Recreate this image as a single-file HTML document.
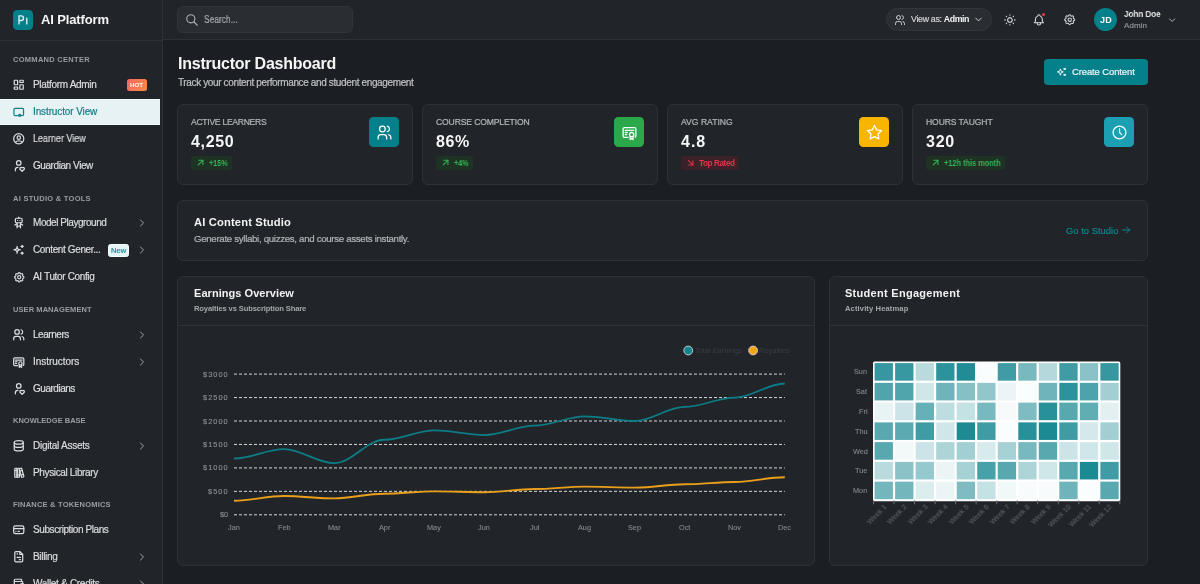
<!DOCTYPE html>
<html><head><meta charset="utf-8">
<style>
*{box-sizing:border-box;margin:0;padding:0}
html,body{width:1200px;height:584px;overflow:hidden;background:#1b1e22;font-family:"Liberation Sans", sans-serif;color:#ececec}
.abs{position:absolute;display:block}
.t{position:absolute;white-space:nowrap;line-height:1;will-change:transform;-webkit-text-stroke:0.2px currentColor}
.t b{-webkit-text-stroke:0}
</style></head><body>
<div class="abs" style="left:0;top:0;width:162px;height:584px;background:#212428"></div>
<div class="abs" style="left:162px;top:0;width:1px;height:584px;background:#2e3136"></div>
<div class="abs" style="left:0;top:40px;width:162px;height:1px;background:#2e3136"></div>
<div class="abs" style="left:12.5px;top:9.9px;width:20px;height:19.8px;border-radius:4.3px;background:#03808a"></div>
<svg class="abs" style="left:12.5px;top:9.9px" width="20" height="20" viewBox="0 0 20 20" fill="none" stroke="#e6f2f3" stroke-width="1.35" stroke-linecap="round" stroke-linejoin="round"><path d="M6 13.9V5.9h2.2a2.3 2.3 0 0 1 0 4.6H6.6"/><path d="M13.8 8.1v5.8"/></svg>
<div class="t" style="left:40.50px;top:13px;font-size:13px;font-weight:700;color:#f5f5f5;-webkit-text-stroke:0;letter-spacing:-0.130px;">AI Platform</div>
<div class="t" style="left:12.50px;top:56px;font-size:7.5px;font-weight:700;color:#9a9da1;-webkit-text-stroke:0;letter-spacing:0.283px;">COMMAND CENTER</div>
<svg class="abs" style="left:12.149999999999999px;top:78.15px;color:#dcdddf" width="13.5" height="13.5" viewBox="0 0 24 24" fill="none" stroke="currentColor" stroke-width="2.2" stroke-linecap="round" stroke-linejoin="round"><path d="M5 4h4a1 1 0 0 1 1 1v6a1 1 0 0 1 -1 1h-4a1 1 0 0 1 -1 -1v-6a1 1 0 0 1 1 -1"/><path d="M5 16h4a1 1 0 0 1 1 1v2a1 1 0 0 1 -1 1h-4a1 1 0 0 1 -1 -1v-2a1 1 0 0 1 1 -1"/><path d="M15 12h4a1 1 0 0 1 1 1v6a1 1 0 0 1 -1 1h-4a1 1 0 0 1 -1 -1v-6a1 1 0 0 1 1 -1"/><path d="M15 4h4a1 1 0 0 1 1 1v2a1 1 0 0 1 -1 1h-4a1 1 0 0 1 -1 -1v-2a1 1 0 0 1 1 -1"/></svg>
<div class="t" style="left:33.00px;top:80px;font-size:10px;font-weight:400;color:#dcdddf;letter-spacing:-0.309px;">Platform Admin</div>
<div class="abs" style="left:127px;top:79px;width:20px;height:12px;border-radius:2.5px;background:linear-gradient(120deg,#fa6760,#f68a48)"></div>
<div class="t" style="left:130.00px;top:82px;font-size:6.2px;font-weight:700;color:#fff5f0;-webkit-text-stroke:0;letter-spacing:-0.033px;">HOT</div>
<div class="abs" style="left:0;top:99px;width:159.5px;height:26px;background:#e6f2f3;border-top:1px solid #eef9f9;border-bottom:1px solid #eef9f9"></div>
<svg class="abs" style="left:12.149999999999999px;top:105.15px;color:#127f88" width="13.5" height="13.5" viewBox="0 0 24 24" fill="none" stroke="currentColor" stroke-width="2.2" stroke-linecap="round" stroke-linejoin="round"><path d="M9.5 19h-4a2 2 0 0 1 -2 -2v-9a2 2 0 0 1 2 -2h13a2 2 0 0 1 2 2v9a2 2 0 0 1 -2 2"/><ellipse cx="13.8" cy="18.4" rx="3" ry="2.1" fill="currentColor" stroke-width="1.2"/></svg>
<div class="t" style="left:33.00px;top:107px;font-size:10px;font-weight:400;color:#127f88;letter-spacing:-0.118px;">Instructor View</div>
<svg class="abs" style="left:12.149999999999999px;top:132.15px;color:#dcdddf" width="13.5" height="13.5" viewBox="0 0 24 24" fill="none" stroke="currentColor" stroke-width="2.2" stroke-linecap="round" stroke-linejoin="round"><path d="M12 12m-9 0a9 9 0 1 0 18 0a9 9 0 1 0 -18 0"/><path d="M12 10m-3 0a3 3 0 1 0 6 0a3 3 0 1 0 -6 0"/><path d="M6.168 18.849a4 4 0 0 1 3.832 -2.849h4a4 4 0 0 1 3.834 2.855"/></svg>
<div class="t" style="left:33.00px;top:134px;font-size:10px;font-weight:400;color:#dcdddf;transform:scaleX(0.8973);transform-origin:0 0;">Learner View</div>
<svg class="abs" style="left:12.149999999999999px;top:159.15px;color:#dcdddf" width="13.5" height="13.5" viewBox="0 0 24 24" fill="none" stroke="currentColor" stroke-width="2.2" stroke-linecap="round" stroke-linejoin="round"><path d="M8 7a4 4 0 1 0 8 0a4 4 0 0 0 -8 0"/><path d="M6 21v-2a4 4 0 0 1 4 -4h.5"/><path d="M18 22l3.35 -3.284a2.143 2.143 0 0 0 .005 -3.071a2.242 2.242 0 0 0 -3.129 -.006l-.224 .22l-.223 -.22a2.242 2.242 0 0 0 -3.128 -.006a2.143 2.143 0 0 0 -.006 3.071l3.355 3.296z"/></svg>
<div class="t" style="left:33.00px;top:161px;font-size:10px;font-weight:400;color:#dcdddf;letter-spacing:-0.427px;">Guardian View</div>
<div class="t" style="left:12.50px;top:195px;font-size:7.5px;font-weight:700;color:#9a9da1;-webkit-text-stroke:0;letter-spacing:0.275px;">AI STUDIO &amp; TOOLS</div>
<svg class="abs" style="left:12.149999999999999px;top:216.15px;color:#dcdddf" width="13.5" height="13.5" viewBox="0 0 24 24" fill="none" stroke="currentColor" stroke-width="2.2" stroke-linecap="round" stroke-linejoin="round"><path d="M6 6a2 2 0 0 1 2 -2h8a2 2 0 0 1 2 2v4a2 2 0 0 1 -2 2h-8a2 2 0 0 1 -2 -2l0 -4"/><path d="M12 2v2"/><path d="M9 12v9"/><path d="M15 12v9"/><path d="M5 16l4 -2"/><path d="M15 14l4 2"/><path d="M9 18h6"/><path d="M10 8v.01"/><path d="M14 8v.01"/></svg>
<div class="t" style="left:33.00px;top:218px;font-size:10px;font-weight:400;color:#dcdddf;letter-spacing:-0.454px;">Model Playground</div>
<svg class="abs" style="left:136px;top:216.7px;color:#a9abaf" width="12" height="12" viewBox="0 0 24 24" fill="none" stroke="currentColor" stroke-width="1.9" stroke-linecap="round" stroke-linejoin="round"><path d="M9 6l6 6l-6 6"/></svg>
<svg class="abs" style="left:12.149999999999999px;top:243.15px;color:#dcdddf" width="13.5" height="13.5" viewBox="0 0 24 24" fill="none" stroke="currentColor" stroke-width="2.2" stroke-linecap="round" stroke-linejoin="round"><path d="M16 18a2 2 0 0 1 2 2a2 2 0 0 1 2 -2a2 2 0 0 1 -2 -2a2 2 0 0 1 -2 2zm0 -12a2 2 0 0 1 2 2a2 2 0 0 1 2 -2a2 2 0 0 1 -2 -2a2 2 0 0 1 -2 2zm-7 12a6 6 0 0 1 6 -6a6 6 0 0 1 -6 -6a6 6 0 0 1 -6 6a6 6 0 0 1 6 6z"/></svg>
<div class="t" style="left:33.00px;top:245px;font-size:10px;font-weight:400;color:#dcdddf;letter-spacing:-0.373px;">Content Gener...</div>
<svg class="abs" style="left:136px;top:243.7px;color:#a9abaf" width="12" height="12" viewBox="0 0 24 24" fill="none" stroke="currentColor" stroke-width="1.9" stroke-linecap="round" stroke-linejoin="round"><path d="M9 6l6 6l-6 6"/></svg>
<div class="abs" style="left:108px;top:243.6px;width:21.4px;height:13px;border-radius:2.5px;background:#e4f3f4;border:1px solid #f4fbfb"></div>
<div class="t" style="left:111.15px;top:247px;font-size:7.5px;font-weight:400;color:#1a8c95;letter-spacing:0.042px;">New</div>
<svg class="abs" style="left:12.649999999999999px;top:270.65px;color:#dcdddf" width="12.5" height="12.5" viewBox="0 0 24 24" fill="none" stroke="currentColor" stroke-width="2.2" stroke-linecap="round" stroke-linejoin="round"><path d="M10.325 4.317c.426 -1.756 2.924 -1.756 3.35 0a1.724 1.724 0 0 0 2.573 1.066c1.543 -.94 3.31 .826 2.37 2.37a1.724 1.724 0 0 0 1.065 2.572c1.756 .426 1.756 2.924 0 3.35a1.724 1.724 0 0 0 -1.066 2.573c.94 1.543 -.826 3.31 -2.37 2.37a1.724 1.724 0 0 0 -2.572 1.065c-.426 1.756 -2.924 1.756 -3.35 0a1.724 1.724 0 0 0 -2.573 -1.066c-1.543 .94 -3.31 -.826 -2.37 -2.37a1.724 1.724 0 0 0 -1.065 -2.572c-1.756 -.426 -1.756 -2.924 0 -3.35a1.724 1.724 0 0 0 1.066 -2.573c-.94 -1.543 .826 -3.31 2.37 -2.37c1 .608 2.296 .07 2.572 -1.065z"/><path d="M9 12a3 3 0 1 0 6 0a3 3 0 0 0 -6 0"/></svg>
<div class="t" style="left:33.00px;top:272px;font-size:10px;font-weight:400;color:#dcdddf;letter-spacing:-0.350px;">AI Tutor Config</div>
<div class="t" style="left:12.50px;top:306px;font-size:7.5px;font-weight:700;color:#9a9da1;-webkit-text-stroke:0;letter-spacing:0.077px;">USER MANAGEMENT</div>
<svg class="abs" style="left:12.149999999999999px;top:328.15px;color:#dcdddf" width="13.5" height="13.5" viewBox="0 0 24 24" fill="none" stroke="currentColor" stroke-width="2.2" stroke-linecap="round" stroke-linejoin="round"><path d="M9 7m-4 0a4 4 0 1 0 8 0a4 4 0 1 0 -8 0"/><path d="M3 21v-2a4 4 0 0 1 4 -4h4a4 4 0 0 1 4 4v2"/><path d="M16 3.13a4 4 0 0 1 0 7.75"/><path d="M21 21v-2a4 4 0 0 0 -3 -3.85"/></svg>
<div class="t" style="left:33.00px;top:330px;font-size:10px;font-weight:400;color:#dcdddf;letter-spacing:-0.453px;">Learners</div>
<svg class="abs" style="left:136px;top:328.7px;color:#a9abaf" width="12" height="12" viewBox="0 0 24 24" fill="none" stroke="currentColor" stroke-width="1.9" stroke-linecap="round" stroke-linejoin="round"><path d="M9 6l6 6l-6 6"/></svg>
<svg class="abs" style="left:12.149999999999999px;top:355.15px;color:#dcdddf" width="13.5" height="13.5" viewBox="0 0 24 24" fill="none" stroke="currentColor" stroke-width="2.2" stroke-linecap="round" stroke-linejoin="round"><path d="M15 15m-3 0a3 3 0 1 0 6 0a3 3 0 1 0 -6 0"/><path d="M13 17.5v4.5l2 -1.5l2 1.5v-4.5"/><path d="M10 19h-5a2 2 0 0 1 -2 -2v-10c0 -1.1 .9 -2 2 -2h14a2 2 0 0 1 2 2v10a2 2 0 0 1 -1 1.73"/><path d="M6 9l12 0"/><path d="M6 12l3 0"/><path d="M6 15l2 0"/></svg>
<div class="t" style="left:33.00px;top:357px;font-size:10px;font-weight:400;color:#dcdddf;letter-spacing:-0.039px;">Instructors</div>
<svg class="abs" style="left:136px;top:355.7px;color:#a9abaf" width="12" height="12" viewBox="0 0 24 24" fill="none" stroke="currentColor" stroke-width="1.9" stroke-linecap="round" stroke-linejoin="round"><path d="M9 6l6 6l-6 6"/></svg>
<svg class="abs" style="left:12.149999999999999px;top:382.15px;color:#dcdddf" width="13.5" height="13.5" viewBox="0 0 24 24" fill="none" stroke="currentColor" stroke-width="2.2" stroke-linecap="round" stroke-linejoin="round"><path d="M8 7a4 4 0 1 0 8 0a4 4 0 0 0 -8 0"/><path d="M6 21v-2a4 4 0 0 1 4 -4h.5"/><path d="M18 22l3.35 -3.284a2.143 2.143 0 0 0 .005 -3.071a2.242 2.242 0 0 0 -3.129 -.006l-.224 .22l-.223 -.22a2.242 2.242 0 0 0 -3.128 -.006a2.143 2.143 0 0 0 -.006 3.071l3.355 3.296z"/></svg>
<div class="t" style="left:33.00px;top:384px;font-size:10px;font-weight:400;color:#dcdddf;letter-spacing:-0.480px;">Guardians</div>
<div class="t" style="left:12.50px;top:417px;font-size:7.5px;font-weight:700;color:#9a9da1;-webkit-text-stroke:0;letter-spacing:0.006px;">KNOWLEDGE BASE</div>
<svg class="abs" style="left:12.149999999999999px;top:439.15px;color:#dcdddf" width="13.5" height="13.5" viewBox="0 0 24 24" fill="none" stroke="currentColor" stroke-width="2.2" stroke-linecap="round" stroke-linejoin="round"><path d="M12 6m-8 0a8 3 0 1 0 16 0a8 3 0 1 0 -16 0"/><path d="M4 6v6a8 3 0 0 0 16 0v-6"/><path d="M4 12v6a8 3 0 0 0 16 0v-6"/></svg>
<div class="t" style="left:33.00px;top:441px;font-size:10px;font-weight:400;color:#dcdddf;letter-spacing:-0.249px;">Digital Assets</div>
<svg class="abs" style="left:136px;top:439.7px;color:#a9abaf" width="12" height="12" viewBox="0 0 24 24" fill="none" stroke="currentColor" stroke-width="1.9" stroke-linecap="round" stroke-linejoin="round"><path d="M9 6l6 6l-6 6"/></svg>
<svg class="abs" style="left:12.149999999999999px;top:466.15px;color:#dcdddf" width="13.5" height="13.5" viewBox="0 0 24 24" fill="none" stroke="currentColor" stroke-width="2.2" stroke-linecap="round" stroke-linejoin="round"><path d="M5 4m0 1a1 1 0 0 1 1 -1h2a1 1 0 0 1 1 1v14a1 1 0 0 1 -1 1h-2a1 1 0 0 1 -1 -1z"/><path d="M9 4m0 1a1 1 0 0 1 1 -1h2a1 1 0 0 1 1 1v14a1 1 0 0 1 -1 1h-2a1 1 0 0 1 -1 -1z"/><path d="M5 8h4"/><path d="M9 16h4"/><path d="M13.803 4.56l2.184 -.53c.562 -.135 1.133 .19 1.282 .732l3.695 13.418a1.02 1.02 0 0 1 -.634 1.219l-.133 .041l-2.184 .53c-.562 .135 -1.133 -.19 -1.282 -.732l-3.695 -13.418a1.02 1.02 0 0 1 .634 -1.219l.133 -.041z"/><path d="M14 9l4 -1"/><path d="M16 16l3.923 -.98"/></svg>
<div class="t" style="left:33.00px;top:468px;font-size:10px;font-weight:400;color:#dcdddf;letter-spacing:-0.353px;">Physical Library</div>
<div class="t" style="left:12.50px;top:501px;font-size:7.5px;font-weight:700;color:#9a9da1;-webkit-text-stroke:0;letter-spacing:0.209px;">FINANCE &amp; TOKENOMICS</div>
<svg class="abs" style="left:12.149999999999999px;top:523.15px;color:#dcdddf" width="13.5" height="13.5" viewBox="0 0 24 24" fill="none" stroke="currentColor" stroke-width="2.2" stroke-linecap="round" stroke-linejoin="round"><path d="M3 5m0 3a3 3 0 0 1 3 -3h12a3 3 0 0 1 3 3v8a3 3 0 0 1 -3 3h-12a3 3 0 0 1 -3 -3z"/><path d="M3 10l18 0"/><path d="M7 15l.01 0"/><path d="M11 15l2 0"/></svg>
<div class="t" style="left:33.00px;top:525px;font-size:10px;font-weight:400;color:#dcdddf;letter-spacing:-0.413px;">Subscription Plans</div>
<svg class="abs" style="left:12.149999999999999px;top:550.15px;color:#dcdddf" width="13.5" height="13.5" viewBox="0 0 24 24" fill="none" stroke="currentColor" stroke-width="2.2" stroke-linecap="round" stroke-linejoin="round"><path d="M14 3v4a1 1 0 0 0 1 1h4"/><path d="M17 21h-10a2 2 0 0 1 -2 -2v-14a2 2 0 0 1 2 -2h7l5 5v11a2 2 0 0 1 -2 2z"/><path d="M9 7l1 0"/><path d="M9 13l6 0"/><path d="M13 17l2 0"/></svg>
<div class="t" style="left:33.00px;top:552px;font-size:10px;font-weight:400;color:#dcdddf;letter-spacing:-0.315px;">Billing</div>
<svg class="abs" style="left:136px;top:550.7px;color:#a9abaf" width="12" height="12" viewBox="0 0 24 24" fill="none" stroke="currentColor" stroke-width="1.9" stroke-linecap="round" stroke-linejoin="round"><path d="M9 6l6 6l-6 6"/></svg>
<svg class="abs" style="left:12.149999999999999px;top:577.15px;color:#dcdddf" width="13.5" height="13.5" viewBox="0 0 24 24" fill="none" stroke="currentColor" stroke-width="2.2" stroke-linecap="round" stroke-linejoin="round"><path d="M17 8v-3a1 1 0 0 0 -1 -1h-10a2 2 0 0 0 0 4h12a1 1 0 0 1 1 1v3m0 4v3a1 1 0 0 1 -1 1h-12a2 2 0 0 1 -2 -2v-12"/><path d="M20 12v4h-4a2 2 0 0 1 0 -4h4"/></svg>
<div class="t" style="left:33.00px;top:579px;font-size:10px;font-weight:400;color:#dcdddf;letter-spacing:-0.302px;">Wallet &amp; Credits</div>
<svg class="abs" style="left:136px;top:577.7px;color:#a9abaf" width="12" height="12" viewBox="0 0 24 24" fill="none" stroke="currentColor" stroke-width="1.9" stroke-linecap="round" stroke-linejoin="round"><path d="M9 6l6 6l-6 6"/></svg>
<div class="abs" style="left:163px;top:0;width:1037px;height:39px;background:#212428"></div>
<div class="abs" style="left:163px;top:39px;width:1037px;height:1px;background:#2e3136"></div>
<div class="abs" style="left:177px;top:6px;width:176px;height:27px;border-radius:6px;background:#2a2d32;border:1px solid #313439"></div>
<svg class="abs" style="left:184.8px;top:12.600000000000001px;color:#aeb0b4" width="14" height="14" viewBox="0 0 24 24" fill="none" stroke="currentColor" stroke-width="1.9" stroke-linecap="round" stroke-linejoin="round"><path d="M10 10m-7 0a7 7 0 1 0 14 0a7 7 0 1 0 -14 0"/><path d="M21 21l-6 -6"/></svg>
<div class="t" style="left:204.30px;top:15px;font-size:10px;font-weight:400;color:#a9abaf;transform:scaleX(0.8412);transform-origin:0 0;">Search...</div>
<div class="abs" style="left:886px;top:8px;width:106px;height:23px;border-radius:12px;background:#2a2d32;border:1px solid #33363b"></div>
<svg class="abs" style="left:893.8px;top:13.75px;color:#cfd0d3" width="12" height="12" viewBox="0 0 24 24" fill="none" stroke="currentColor" stroke-width="2.0" stroke-linecap="round" stroke-linejoin="round"><path d="M9 7m-4 0a4 4 0 1 0 8 0a4 4 0 1 0 -8 0"/><path d="M3 21v-2a4 4 0 0 1 4 -4h4a4 4 0 0 1 4 4v2"/><path d="M16 3.13a4 4 0 0 1 0 7.75"/><path d="M21 21v-2a4 4 0 0 0 -3 -3.85"/></svg>
<div class="t" style="left:910.5px;top:15px;font-size:8.8px;color:#d2d3d6;letter-spacing:-0.3px">View as: <b style="color:#f2f2f2;letter-spacing:-0.45px">Admin</b></div>
<svg class="abs" style="left:973.2px;top:14.0px;color:#cfd0d3" width="11" height="11" viewBox="0 0 24 24" fill="none" stroke="currentColor" stroke-width="2.1" stroke-linecap="round" stroke-linejoin="round"><path d="M6 9l6 6l6 -6"/></svg>
<svg class="abs" style="left:1002.6px;top:12.999999999999998px;color:#d4d5d8" width="13.8" height="13.8" viewBox="0 0 24 24" fill="none" stroke="currentColor" stroke-width="1.9" stroke-linecap="round" stroke-linejoin="round"><path d="M12 12m-4 0a4 4 0 1 0 8 0a4 4 0 1 0 -8 0"/><path d="M3 12h1m8 -9v1m8 8h1m-9 8v1m-6.4 -15.4l.7 .7m12.1 -.7l-.7 .7m0 11.4l.7 .7m-12.1 -.7l-.7 .7"/></svg>
<svg class="abs" style="left:1032.3999999999999px;top:12.700000000000001px;color:#d4d5d8" width="13.8" height="13.8" viewBox="0 0 24 24" fill="none" stroke="currentColor" stroke-width="1.9" stroke-linecap="round" stroke-linejoin="round"><path d="M10 5a2 2 0 1 1 4 0a7 7 0 0 1 4 6v3a4 4 0 0 0 2 3h-16a4 4 0 0 0 2 -3v-3a7 7 0 0 1 4 -6"/><path d="M9 17v1a3 3 0 0 0 6 0v-1"/></svg>
<div class="abs" style="left:1041.6px;top:13.2px;width:3px;height:3px;border-radius:50%;background:#f03e3e"></div>
<svg class="abs" style="left:1062.7px;top:13.2px;color:#d4d5d8" width="13.4" height="13.4" viewBox="0 0 24 24" fill="none" stroke="currentColor" stroke-width="1.9" stroke-linecap="round" stroke-linejoin="round"><path d="M10.325 4.317c.426 -1.756 2.924 -1.756 3.35 0a1.724 1.724 0 0 0 2.573 1.066c1.543 -.94 3.31 .826 2.37 2.37a1.724 1.724 0 0 0 1.065 2.572c1.756 .426 1.756 2.924 0 3.35a1.724 1.724 0 0 0 -1.066 2.573c.94 1.543 -.826 3.31 -2.37 2.37a1.724 1.724 0 0 0 -2.572 1.065c-.426 1.756 -2.924 1.756 -3.35 0a1.724 1.724 0 0 0 -2.573 -1.066c-1.543 .94 -3.31 -.826 -2.37 -2.37a1.724 1.724 0 0 0 -1.065 -2.572c-1.756 -.426 -1.756 -2.924 0 -3.35a1.724 1.724 0 0 0 1.066 -2.573c-.94 -1.543 .826 -3.31 2.37 -2.37c1 .608 2.296 .07 2.572 -1.065z"/><path d="M9 12a3 3 0 1 0 6 0a3 3 0 0 0 -6 0"/></svg>
<div class="abs" style="left:1094px;top:8.3px;width:23px;height:23px;border-radius:50%;background:#03808a"></div>
<div class="t" style="left:1099.64px;top:16px;font-size:9px;font-weight:700;color:#f4f8f8;-webkit-text-stroke:0;letter-spacing:0.204px;">JD</div>
<div class="t" style="left:1124.00px;top:9px;font-size:9.4px;font-weight:700;color:#e9e9ea;-webkit-text-stroke:0;transform:scaleX(0.8578);transform-origin:0 0;">John Doe</div>
<div class="t" style="left:1124.00px;top:22px;font-size:8px;font-weight:400;color:#8f9195;letter-spacing:0.063px;">Admin</div>
<svg class="abs" style="left:1167.3px;top:14.600000000000001px;color:#b9bbbe" width="10.4" height="10.4" viewBox="0 0 24 24" fill="none" stroke="currentColor" stroke-width="2.1" stroke-linecap="round" stroke-linejoin="round"><path d="M6 9l6 6l6 -6"/></svg>
<div class="t" style="left:178.00px;top:56px;font-size:16px;font-weight:700;color:#f6f6f6;-webkit-text-stroke:0;letter-spacing:-0.232px;">Instructor Dashboard</div>
<div class="t" style="left:178.00px;top:78px;font-size:10px;font-weight:400;color:#c0c2c5;letter-spacing:-0.365px;">Track your content performance and student engagement</div>
<div class="abs" style="left:1044px;top:59px;width:104px;height:26px;border-radius:4px;background:#03808a"></div>
<svg class="abs" style="left:1056.1px;top:66.3px;color:#eef7f8" width="11.8" height="11.8" viewBox="0 0 24 24" fill="none" stroke="currentColor" stroke-width="2.0" stroke-linecap="round" stroke-linejoin="round"><path d="M16 18a2 2 0 0 1 2 2a2 2 0 0 1 2 -2a2 2 0 0 1 -2 -2a2 2 0 0 1 -2 2zm0 -12a2 2 0 0 1 2 2a2 2 0 0 1 2 -2a2 2 0 0 1 -2 -2a2 2 0 0 1 -2 2zm-7 12a6 6 0 0 1 6 -6a6 6 0 0 1 -6 -6a6 6 0 0 1 -6 6a6 6 0 0 1 6 6z"/></svg>
<div class="t" style="left:1072.30px;top:67px;font-size:9.4px;font-weight:400;color:#eef7f8;letter-spacing:-0.065px;">Create Content</div>
<div class="abs" style="left:177px;top:104px;width:236px;height:81px;border-radius:6px;background:#212428;border:1px solid #2e3136"></div>
<div class="t" style="left:190.80px;top:118px;font-size:8.6px;font-weight:400;color:#b4b6b9;letter-spacing:-0.291px;">ACTIVE LEARNERS</div>
<div class="t" style="left:190.80px;top:134px;font-size:16px;font-weight:700;color:#f6f6f6;-webkit-text-stroke:0;letter-spacing:0.658px;">4,250</div>
<div class="abs" style="left:191px;top:156px;width:41.0px;height:13.5px;border-radius:3px;background:#1f3325"></div>
<svg class="abs" style="left:194.8px;top:157.1px;color:#34b556" width="11.2" height="11.2" viewBox="0 0 24 24" fill="none" stroke="currentColor" stroke-width="2.3" stroke-linecap="round" stroke-linejoin="round"><path d="M17 7l-10 10"/><path d="M8 7l9 0l0 9"/></svg>
<div class="t" style="left:208.50px;top:160px;font-size:8.2px;font-weight:700;color:#34b556;-webkit-text-stroke:0;transform:scaleX(0.8774);transform-origin:0 0;">+15%</div>
<div class="abs" style="left:369px;top:117px;width:30px;height:30px;border-radius:4.5px;background:#03808a"></div>
<svg class="abs" style="left:375.75px;top:123.69999999999999px;color:#ffffff" width="17" height="17" viewBox="0 0 24 24" fill="none" stroke="currentColor" stroke-width="1.8" stroke-linecap="round" stroke-linejoin="round"><path d="M9 7m-4 0a4 4 0 1 0 8 0a4 4 0 1 0 -8 0"/><path d="M3 21v-2a4 4 0 0 1 4 -4h4a4 4 0 0 1 4 4v2"/><path d="M16 3.13a4 4 0 0 1 0 7.75"/><path d="M21 21v-2a4 4 0 0 0 -3 -3.85"/></svg>
<div class="abs" style="left:422px;top:104px;width:236px;height:81px;border-radius:6px;background:#212428;border:1px solid #2e3136"></div>
<div class="t" style="left:435.80px;top:118px;font-size:8.6px;font-weight:400;color:#b4b6b9;letter-spacing:-0.144px;">COURSE COMPLETION</div>
<div class="t" style="left:435.80px;top:134px;font-size:16px;font-weight:700;color:#f6f6f6;-webkit-text-stroke:0;letter-spacing:0.624px;">86%</div>
<div class="abs" style="left:436px;top:156px;width:37.0px;height:13.5px;border-radius:3px;background:#1f3325"></div>
<svg class="abs" style="left:439.79999999999995px;top:157.1px;color:#34b556" width="11.2" height="11.2" viewBox="0 0 24 24" fill="none" stroke="currentColor" stroke-width="2.3" stroke-linecap="round" stroke-linejoin="round"><path d="M17 7l-10 10"/><path d="M8 7l9 0l0 9"/></svg>
<div class="t" style="left:453.50px;top:160px;font-size:8.2px;font-weight:700;color:#34b556;-webkit-text-stroke:0;transform:scaleX(0.8767);transform-origin:0 0;">+4%</div>
<div class="abs" style="left:614px;top:117px;width:30px;height:30px;border-radius:4.5px;background:#2aa84a"></div>
<svg class="abs" style="left:620.75px;top:123.69999999999999px;color:#ffffff" width="17" height="17" viewBox="0 0 24 24" fill="none" stroke="currentColor" stroke-width="1.8" stroke-linecap="round" stroke-linejoin="round"><path d="M15 15m-3 0a3 3 0 1 0 6 0a3 3 0 1 0 -6 0"/><path d="M13 17.5v4.5l2 -1.5l2 1.5v-4.5"/><path d="M10 19h-5a2 2 0 0 1 -2 -2v-10c0 -1.1 .9 -2 2 -2h14a2 2 0 0 1 2 2v10a2 2 0 0 1 -1 1.73"/><path d="M6 9l12 0"/><path d="M6 12l3 0"/><path d="M6 15l2 0"/></svg>
<div class="abs" style="left:667px;top:104px;width:236px;height:81px;border-radius:6px;background:#212428;border:1px solid #2e3136"></div>
<div class="t" style="left:680.80px;top:118px;font-size:8.6px;font-weight:400;color:#b4b6b9;letter-spacing:-0.005px;">AVG RATING</div>
<div class="t" style="left:680.80px;top:134px;font-size:16px;font-weight:700;color:#f6f6f6;-webkit-text-stroke:0;letter-spacing:1.015px;">4.8</div>
<div class="abs" style="left:681px;top:156px;width:58.4px;height:13.5px;border-radius:3px;background:#3a2228"></div>
<svg class="abs" style="left:684.8px;top:157.1px;color:#e4334a" width="11.2" height="11.2" viewBox="0 0 24 24" fill="none" stroke="currentColor" stroke-width="2.3" stroke-linecap="round" stroke-linejoin="round"><path d="M7 7l10 10"/><path d="M17 8l0 9l-9 0"/></svg>
<div class="t" style="left:698.50px;top:160px;font-size:8.2px;font-weight:700;color:#e4334a;-webkit-text-stroke:0;letter-spacing:-0.421px;">Top Rated</div>
<div class="abs" style="left:859px;top:117px;width:30px;height:30px;border-radius:4.5px;background:#f7b500"></div>
<svg class="abs" style="left:865.75px;top:123.69999999999999px;color:#ffffff" width="17" height="17" viewBox="0 0 24 24" fill="none" stroke="currentColor" stroke-width="1.8" stroke-linecap="round" stroke-linejoin="round"><path d="M12 17.75l-6.172 3.245l1.179 -6.873l-5 -4.867l6.9 -1l3.086 -6.253l3.086 6.253l6.9 1l-5 4.867l1.179 6.873z"/></svg>
<div class="abs" style="left:912px;top:104px;width:236px;height:81px;border-radius:6px;background:#212428;border:1px solid #2e3136"></div>
<div class="t" style="left:925.80px;top:118px;font-size:8.6px;font-weight:400;color:#b4b6b9;letter-spacing:-0.116px;">HOURS TAUGHT</div>
<div class="t" style="left:925.80px;top:134px;font-size:16px;font-weight:700;color:#f6f6f6;-webkit-text-stroke:0;letter-spacing:0.788px;">320</div>
<div class="abs" style="left:926px;top:156px;width:79.0px;height:13.5px;border-radius:3px;background:#1f3325"></div>
<svg class="abs" style="left:929.8px;top:157.1px;color:#34b556" width="11.2" height="11.2" viewBox="0 0 24 24" fill="none" stroke="currentColor" stroke-width="2.3" stroke-linecap="round" stroke-linejoin="round"><path d="M17 7l-10 10"/><path d="M8 7l9 0l0 9"/></svg>
<div class="t" style="left:943.50px;top:160px;font-size:8.2px;font-weight:700;color:#34b556;-webkit-text-stroke:0;transform:scaleX(0.8980);transform-origin:0 0;">+12h this month</div>
<div class="abs" style="left:1104px;top:117px;width:30px;height:30px;border-radius:4.5px;background:#1a9fb3"></div>
<svg class="abs" style="left:1110.75px;top:123.69999999999999px;color:#ffffff" width="17" height="17" viewBox="0 0 24 24" fill="none" stroke="currentColor" stroke-width="1.8" stroke-linecap="round" stroke-linejoin="round"><path d="M3 12a9 9 0 1 0 18 0a9 9 0 0 0 -18 0"/><path d="M12 7v5l3 3"/></svg>
<div class="abs" style="left:177px;top:200px;width:971px;height:61px;border-radius:6px;background:#212428;border:1px solid #2e3136"></div>
<div class="t" style="left:193.50px;top:217px;font-size:11.2px;font-weight:700;color:#f2f2f2;-webkit-text-stroke:0;letter-spacing:0.152px;">AI Content Studio</div>
<div class="t" style="left:193.50px;top:234px;font-size:9.7px;font-weight:400;color:#b3b5b8;letter-spacing:-0.316px;">Generate syllabi, quizzes, and course assets instantly.</div>
<div class="t" style="left:1066.25px;top:227px;font-size:9.3px;font-weight:400;color:#0c878f;letter-spacing:0.060px;">Go to Studio</div>
<svg class="abs" style="left:1120.4px;top:224.2px;color:#0c878f" width="12" height="12" viewBox="0 0 24 24" fill="none" stroke="currentColor" stroke-width="2.0" stroke-linecap="round" stroke-linejoin="round"><path d="M5 12l14 0"/><path d="M13 18l6 -6"/><path d="M13 6l6 6"/></svg>
<div class="abs" style="left:177px;top:276px;width:637.5px;height:289.5px;border-radius:6px;background:#212428;border:1px solid #2e3136"></div>
<div class="abs" style="left:178px;top:324.5px;width:635.5px;height:1px;background:#2e3136"></div>
<div class="t" style="left:193.60px;top:288px;font-size:11px;font-weight:700;color:#f2f2f2;-webkit-text-stroke:0;letter-spacing:0.052px;">Earnings Overview</div>
<div class="t" style="left:193.60px;top:305px;font-size:7.6px;font-weight:700;color:#a4a6aa;-webkit-text-stroke:0;letter-spacing:-0.125px;">Royalties vs Subscription Share</div>
<div class="abs" style="left:829px;top:276px;width:319px;height:289.5px;border-radius:6px;background:#212428;border:1px solid #2e3136"></div>
<div class="abs" style="left:830px;top:324.5px;width:317px;height:1px;background:#2e3136"></div>
<div class="t" style="left:845.20px;top:288px;font-size:11px;font-weight:700;color:#f2f2f2;-webkit-text-stroke:0;letter-spacing:0.286px;">Student Engagement</div>
<div class="t" style="left:845.20px;top:305px;font-size:7.6px;font-weight:700;color:#a4a6aa;-webkit-text-stroke:0;letter-spacing:0.112px;">Activity Heatmap</div>
<svg class="abs" style="left:0;top:0" width="1200" height="584"><line x1="234.0" y1="514.80" x2="784.8" y2="514.80" stroke="#d6d8da" stroke-width="1" stroke-dasharray="3 2"/><line x1="234.0" y1="491.35" x2="784.8" y2="491.35" stroke="#d6d8da" stroke-width="1" stroke-dasharray="3 2"/><line x1="234.0" y1="467.90" x2="784.8" y2="467.90" stroke="#d6d8da" stroke-width="1" stroke-dasharray="3 2"/><line x1="234.0" y1="444.45" x2="784.8" y2="444.45" stroke="#d6d8da" stroke-width="1" stroke-dasharray="3 2"/><line x1="234.0" y1="421.00" x2="784.8" y2="421.00" stroke="#d6d8da" stroke-width="1" stroke-dasharray="3 2"/><line x1="234.0" y1="397.55" x2="784.8" y2="397.55" stroke="#d6d8da" stroke-width="1" stroke-dasharray="3 2"/><line x1="234.0" y1="374.10" x2="784.8" y2="374.10" stroke="#d6d8da" stroke-width="1" stroke-dasharray="3 2"/><path d="M234.00,458.52C251.53,458.52 266.55,449.14 284.07,449.14C301.60,449.14 316.62,463.21 334.15,463.21C351.67,463.21 366.69,439.76 384.22,439.76C401.74,439.76 416.77,430.38 434.29,430.38C451.82,430.38 466.84,435.07 484.36,435.07C501.89,435.07 516.91,425.69 534.44,425.69C551.96,425.69 566.98,416.31 584.51,416.31C602.03,416.31 617.06,421.00 634.58,421.00C652.11,421.00 667.13,406.93 684.65,406.93C702.18,406.93 717.20,397.55 734.73,397.55C752.25,397.55 767.27,383.48 784.80,383.48" fill="none" stroke="#0c7d87" stroke-width="1.8"/><path d="M234.00,500.73C251.53,500.73 266.55,496.04 284.07,496.04C301.60,496.04 316.62,498.38 334.15,498.38C351.67,498.38 366.69,493.69 384.22,493.69C401.74,493.69 416.77,491.35 434.29,491.35C451.82,491.35 466.84,492.29 484.36,492.29C501.89,492.29 516.91,489.00 534.44,489.00C551.96,489.00 566.98,486.66 584.51,486.66C602.03,486.66 617.06,487.60 634.58,487.60C652.11,487.60 667.13,484.31 684.65,484.31C702.18,484.31 717.20,481.97 734.73,481.97C752.25,481.97 767.27,477.28 784.80,477.28" fill="none" stroke="#ea9f1c" stroke-width="1.9"/><circle cx="688.2" cy="350.5" r="4.4" fill="#13838d" stroke="#d8dadc" stroke-width="0.9"/><circle cx="753.1" cy="350.5" r="4.4" fill="#f5a416" stroke="#d8dadc" stroke-width="0.9"/></svg>
<div class="t" style="left:694.70px;top:347px;font-size:7.5px;font-weight:400;color:#3b3e43;letter-spacing:-0.049px;-webkit-text-stroke:0;">Total Earnings</div>
<div class="t" style="left:759.00px;top:347px;font-size:7.5px;font-weight:400;color:#3b3e43;letter-spacing:-0.032px;-webkit-text-stroke:0;">Royalties</div>
<div class="t" style="left:219.88px;top:511px;font-size:7.3px;font-weight:400;color:#909397;-webkit-text-stroke:0.1px currentColor;">$0</div>
<div class="t" style="left:208.42px;top:488px;font-size:7.3px;font-weight:400;color:#909397;letter-spacing:1.117px;-webkit-text-stroke:0.1px currentColor;">$500</div>
<div class="t" style="left:203.42px;top:464px;font-size:7.3px;font-weight:400;color:#909397;letter-spacing:1.072px;-webkit-text-stroke:0.1px currentColor;">$1000</div>
<div class="t" style="left:203.42px;top:441px;font-size:7.3px;font-weight:400;color:#909397;letter-spacing:1.072px;-webkit-text-stroke:0.1px currentColor;">$1500</div>
<div class="t" style="left:203.42px;top:418px;font-size:7.3px;font-weight:400;color:#909397;letter-spacing:1.072px;-webkit-text-stroke:0.1px currentColor;">$2000</div>
<div class="t" style="left:203.42px;top:394px;font-size:7.3px;font-weight:400;color:#909397;letter-spacing:1.072px;-webkit-text-stroke:0.1px currentColor;">$2500</div>
<div class="t" style="left:203.42px;top:371px;font-size:7.3px;font-weight:400;color:#909397;letter-spacing:1.072px;-webkit-text-stroke:0.1px currentColor;">$3000</div>
<div class="t" style="left:228.12px;top:524px;font-size:7.3px;font-weight:400;color:#85888c;-webkit-text-stroke:0.1px currentColor;">Jan</div>
<div class="t" style="left:277.78px;top:524px;font-size:7.3px;font-weight:400;color:#85888c;-webkit-text-stroke:0.1px currentColor;">Feb</div>
<div class="t" style="left:327.86px;top:524px;font-size:7.3px;font-weight:400;color:#85888c;-webkit-text-stroke:0.1px currentColor;">Mar</div>
<div class="t" style="left:378.54px;top:524px;font-size:7.3px;font-weight:400;color:#85888c;-webkit-text-stroke:0.1px currentColor;">Apr</div>
<div class="t" style="left:427.39px;top:524px;font-size:7.3px;font-weight:400;color:#85888c;-webkit-text-stroke:0.1px currentColor;">May</div>
<div class="t" style="left:478.48px;top:524px;font-size:7.3px;font-weight:400;color:#85888c;-webkit-text-stroke:0.1px currentColor;">Jun</div>
<div class="t" style="left:529.77px;top:524px;font-size:7.3px;font-weight:400;color:#85888c;-webkit-text-stroke:0.1px currentColor;">Jul</div>
<div class="t" style="left:578.02px;top:524px;font-size:7.3px;font-weight:400;color:#85888c;-webkit-text-stroke:0.1px currentColor;">Aug</div>
<div class="t" style="left:628.09px;top:524px;font-size:7.3px;font-weight:400;color:#85888c;-webkit-text-stroke:0.1px currentColor;">Sep</div>
<div class="t" style="left:678.97px;top:524px;font-size:7.3px;font-weight:400;color:#85888c;-webkit-text-stroke:0.1px currentColor;">Oct</div>
<div class="t" style="left:728.24px;top:524px;font-size:7.3px;font-weight:400;color:#85888c;-webkit-text-stroke:0.1px currentColor;">Nov</div>
<div class="t" style="left:778.31px;top:524px;font-size:7.3px;font-weight:400;color:#85888c;-webkit-text-stroke:0.1px currentColor;">Dec</div>
<svg class="abs" style="left:0;top:0" width="1200" height="584"><rect x="873.0" y="361.5" width="247.29999999999995" height="139.70000000000002" rx="1.5" fill="#ffffff"/><rect x="874.60" y="363.10" width="18.32" height="17.56" fill="#3697a0"/><rect x="895.12" y="363.10" width="18.32" height="17.56" fill="#3898a1"/><rect x="915.65" y="363.10" width="18.32" height="17.56" fill="#b9dbde"/><rect x="936.18" y="363.10" width="18.32" height="17.56" fill="#2c929b"/><rect x="956.70" y="363.10" width="18.32" height="17.56" fill="#218c96"/><rect x="977.23" y="363.10" width="18.32" height="17.56" fill="#fafdfd"/><rect x="997.75" y="363.10" width="18.32" height="17.56" fill="#3f9ca4"/><rect x="1018.27" y="363.10" width="18.32" height="17.56" fill="#77b9bf"/><rect x="1038.80" y="363.10" width="18.32" height="17.56" fill="#b4d8db"/><rect x="1059.32" y="363.10" width="18.32" height="17.56" fill="#3f9ca4"/><rect x="1079.85" y="363.10" width="18.32" height="17.56" fill="#8ac2c8"/><rect x="1100.37" y="363.10" width="18.32" height="17.56" fill="#3697a0"/><rect x="874.60" y="382.86" width="18.32" height="17.56" fill="#50a4ac"/><rect x="895.12" y="382.86" width="18.32" height="17.56" fill="#50a4ac"/><rect x="915.65" y="382.86" width="18.32" height="17.56" fill="#d0e7e9"/><rect x="936.18" y="382.86" width="18.32" height="17.56" fill="#6eb4ba"/><rect x="956.70" y="382.86" width="18.32" height="17.56" fill="#85c0c5"/><rect x="977.23" y="382.86" width="18.32" height="17.56" fill="#91c6cb"/><rect x="997.75" y="382.86" width="18.32" height="17.56" fill="#ecf5f6"/><rect x="1018.27" y="382.86" width="18.32" height="17.56" fill="#fafdfd"/><rect x="1038.80" y="382.86" width="18.32" height="17.56" fill="#6eb4ba"/><rect x="1059.32" y="382.86" width="18.32" height="17.56" fill="#2c929b"/><rect x="1079.85" y="382.86" width="18.32" height="17.56" fill="#4da3ab"/><rect x="1100.37" y="382.86" width="18.32" height="17.56" fill="#a1cfd3"/><rect x="874.60" y="402.61" width="18.32" height="17.56" fill="#e8f3f4"/><rect x="895.12" y="402.61" width="18.32" height="17.56" fill="#cce4e7"/><rect x="915.65" y="402.61" width="18.32" height="17.56" fill="#67b0b7"/><rect x="936.18" y="402.61" width="18.32" height="17.56" fill="#bddde0"/><rect x="956.70" y="402.61" width="18.32" height="17.56" fill="#c4e1e3"/><rect x="977.23" y="402.61" width="18.32" height="17.56" fill="#77b9bf"/><rect x="997.75" y="402.61" width="18.32" height="17.56" fill="#f6fafb"/><rect x="1018.27" y="402.61" width="18.32" height="17.56" fill="#7ebcc2"/><rect x="1038.80" y="402.61" width="18.32" height="17.56" fill="#289099"/><rect x="1059.32" y="402.61" width="18.32" height="17.56" fill="#57a8af"/><rect x="1079.85" y="402.61" width="18.32" height="17.56" fill="#60adb4"/><rect x="1100.37" y="402.61" width="18.32" height="17.56" fill="#e3f0f2"/><rect x="874.60" y="422.37" width="18.32" height="17.56" fill="#57a8af"/><rect x="895.12" y="422.37" width="18.32" height="17.56" fill="#5baab1"/><rect x="915.65" y="422.37" width="18.32" height="17.56" fill="#3f9ca4"/><rect x="936.18" y="422.37" width="18.32" height="17.56" fill="#d0e7e9"/><rect x="956.70" y="422.37" width="18.32" height="17.56" fill="#1e8b94"/><rect x="977.23" y="422.37" width="18.32" height="17.56" fill="#3f9ca4"/><rect x="997.75" y="422.37" width="18.32" height="17.56" fill="#fafdfd"/><rect x="1018.27" y="422.37" width="18.32" height="17.56" fill="#289099"/><rect x="1038.80" y="422.37" width="18.32" height="17.56" fill="#1c8a93"/><rect x="1059.32" y="422.37" width="18.32" height="17.56" fill="#3f9ca4"/><rect x="1079.85" y="422.37" width="18.32" height="17.56" fill="#d5e9eb"/><rect x="1100.37" y="422.37" width="18.32" height="17.56" fill="#a1cfd3"/><rect x="874.60" y="442.13" width="18.32" height="17.56" fill="#57a8af"/><rect x="895.12" y="442.13" width="18.32" height="17.56" fill="#f3f9f9"/><rect x="915.65" y="442.13" width="18.32" height="17.56" fill="#cce4e7"/><rect x="936.18" y="442.13" width="18.32" height="17.56" fill="#add5d8"/><rect x="956.70" y="442.13" width="18.32" height="17.56" fill="#a1cfd3"/><rect x="977.23" y="442.13" width="18.32" height="17.56" fill="#d7eaec"/><rect x="997.75" y="442.13" width="18.32" height="17.56" fill="#a6d1d5"/><rect x="1018.27" y="442.13" width="18.32" height="17.56" fill="#77b9bf"/><rect x="1038.80" y="442.13" width="18.32" height="17.56" fill="#57a8af"/><rect x="1059.32" y="442.13" width="18.32" height="17.56" fill="#cce4e7"/><rect x="1079.85" y="442.13" width="18.32" height="17.56" fill="#d0e7e9"/><rect x="1100.37" y="442.13" width="18.32" height="17.56" fill="#d0e7e9"/><rect x="874.60" y="461.89" width="18.32" height="17.56" fill="#b9dbde"/><rect x="895.12" y="461.89" width="18.32" height="17.56" fill="#8ac2c8"/><rect x="915.65" y="461.89" width="18.32" height="17.56" fill="#96c9cd"/><rect x="936.18" y="461.89" width="18.32" height="17.56" fill="#ecf5f6"/><rect x="956.70" y="461.89" width="18.32" height="17.56" fill="#a6d1d5"/><rect x="977.23" y="461.89" width="18.32" height="17.56" fill="#48a1a8"/><rect x="997.75" y="461.89" width="18.32" height="17.56" fill="#57a8af"/><rect x="1018.27" y="461.89" width="18.32" height="17.56" fill="#add5d8"/><rect x="1038.80" y="461.89" width="18.32" height="17.56" fill="#d0e7e9"/><rect x="1059.32" y="461.89" width="18.32" height="17.56" fill="#57a8af"/><rect x="1079.85" y="461.89" width="18.32" height="17.56" fill="#1c8a93"/><rect x="1100.37" y="461.89" width="18.32" height="17.56" fill="#3f9ca4"/><rect x="874.60" y="481.64" width="18.32" height="17.56" fill="#73b6bc"/><rect x="895.12" y="481.64" width="18.32" height="17.56" fill="#73b6bc"/><rect x="915.65" y="481.64" width="18.32" height="17.56" fill="#dcedee"/><rect x="936.18" y="481.64" width="18.32" height="17.56" fill="#ecf5f6"/><rect x="956.70" y="481.64" width="18.32" height="17.56" fill="#7ebcc2"/><rect x="977.23" y="481.64" width="18.32" height="17.56" fill="#c4e1e3"/><rect x="997.75" y="481.64" width="18.32" height="17.56" fill="#f1f8f8"/><rect x="1018.27" y="481.64" width="18.32" height="17.56" fill="#f8fbfc"/><rect x="1038.80" y="481.64" width="18.32" height="17.56" fill="#f8fbfc"/><rect x="1059.32" y="481.64" width="18.32" height="17.56" fill="#6eb4ba"/><rect x="1079.85" y="481.64" width="18.32" height="17.56" fill="#fafdfd"/><rect x="1100.37" y="481.64" width="18.32" height="17.56" fill="#57a8af"/><line x1="873.50" y1="500.3" x2="873.50" y2="504.3" stroke="#6b6e73" stroke-width="1"/><line x1="894.02" y1="500.3" x2="894.02" y2="504.3" stroke="#6b6e73" stroke-width="1"/><line x1="914.55" y1="500.3" x2="914.55" y2="504.3" stroke="#6b6e73" stroke-width="1"/><line x1="935.08" y1="500.3" x2="935.08" y2="504.3" stroke="#6b6e73" stroke-width="1"/><line x1="955.60" y1="500.3" x2="955.60" y2="504.3" stroke="#6b6e73" stroke-width="1"/><line x1="976.12" y1="500.3" x2="976.12" y2="504.3" stroke="#6b6e73" stroke-width="1"/><line x1="996.65" y1="500.3" x2="996.65" y2="504.3" stroke="#6b6e73" stroke-width="1"/><line x1="1017.17" y1="500.3" x2="1017.17" y2="504.3" stroke="#6b6e73" stroke-width="1"/><line x1="1037.70" y1="500.3" x2="1037.70" y2="504.3" stroke="#6b6e73" stroke-width="1"/><line x1="1058.22" y1="500.3" x2="1058.22" y2="504.3" stroke="#6b6e73" stroke-width="1"/><line x1="1078.75" y1="500.3" x2="1078.75" y2="504.3" stroke="#6b6e73" stroke-width="1"/><line x1="1099.27" y1="500.3" x2="1099.27" y2="504.3" stroke="#6b6e73" stroke-width="1"/><line x1="1119.80" y1="500.3" x2="1119.80" y2="504.3" stroke="#6b6e73" stroke-width="1"/></svg>
<div class="t" style="left:854.42px;top:368px;font-size:7.3px;font-weight:400;color:#85888c;-webkit-text-stroke:0.1px currentColor;">Sun</div>
<div class="t" style="left:856.45px;top:388px;font-size:7.3px;font-weight:400;color:#85888c;-webkit-text-stroke:0.1px currentColor;">Sat</div>
<div class="t" style="left:858.88px;top:408px;font-size:7.3px;font-weight:400;color:#85888c;-webkit-text-stroke:0.1px currentColor;">Fri</div>
<div class="t" style="left:854.82px;top:428px;font-size:7.3px;font-weight:400;color:#85888c;-webkit-text-stroke:0.1px currentColor;">Thu</div>
<div class="t" style="left:852.52px;top:448px;font-size:7.3px;font-weight:400;color:#85888c;-webkit-text-stroke:0.1px currentColor;">Wed</div>
<div class="t" style="left:855.09px;top:467px;font-size:7.3px;font-weight:400;color:#85888c;-webkit-text-stroke:0.1px currentColor;">Tue</div>
<div class="t" style="left:853.20px;top:487px;font-size:7.3px;font-weight:400;color:#85888c;-webkit-text-stroke:0.1px currentColor;">Mon</div>
<div class="t" style="left:860.65px;top:502.35px;font-size:7.3px;color:#5d6065;-webkit-text-stroke:0.1px currentColor;transform-origin:100% 50%;transform:rotate(-45deg)">Week 1</div>
<div class="t" style="left:881.18px;top:502.35px;font-size:7.3px;color:#5d6065;-webkit-text-stroke:0.1px currentColor;transform-origin:100% 50%;transform:rotate(-45deg)">Week 2</div>
<div class="t" style="left:901.70px;top:502.35px;font-size:7.3px;color:#5d6065;-webkit-text-stroke:0.1px currentColor;transform-origin:100% 50%;transform:rotate(-45deg)">Week 3</div>
<div class="t" style="left:922.23px;top:502.35px;font-size:7.3px;color:#5d6065;-webkit-text-stroke:0.1px currentColor;transform-origin:100% 50%;transform:rotate(-45deg)">Week 4</div>
<div class="t" style="left:942.75px;top:502.35px;font-size:7.3px;color:#5d6065;-webkit-text-stroke:0.1px currentColor;transform-origin:100% 50%;transform:rotate(-45deg)">Week 5</div>
<div class="t" style="left:963.28px;top:502.35px;font-size:7.3px;color:#5d6065;-webkit-text-stroke:0.1px currentColor;transform-origin:100% 50%;transform:rotate(-45deg)">Week 6</div>
<div class="t" style="left:983.80px;top:502.35px;font-size:7.3px;color:#5d6065;-webkit-text-stroke:0.1px currentColor;transform-origin:100% 50%;transform:rotate(-45deg)">Week 7</div>
<div class="t" style="left:1004.33px;top:502.35px;font-size:7.3px;color:#5d6065;-webkit-text-stroke:0.1px currentColor;transform-origin:100% 50%;transform:rotate(-45deg)">Week 8</div>
<div class="t" style="left:1024.85px;top:502.35px;font-size:7.3px;color:#5d6065;-webkit-text-stroke:0.1px currentColor;transform-origin:100% 50%;transform:rotate(-45deg)">Week 9</div>
<div class="t" style="left:1041.32px;top:502.35px;font-size:7.3px;color:#5d6065;-webkit-text-stroke:0.1px currentColor;transform-origin:100% 50%;transform:rotate(-45deg)">Week 10</div>
<div class="t" style="left:1062.39px;top:502.35px;font-size:7.3px;color:#5d6065;-webkit-text-stroke:0.1px currentColor;transform-origin:100% 50%;transform:rotate(-45deg)">Week 11</div>
<div class="t" style="left:1082.37px;top:502.35px;font-size:7.3px;color:#5d6065;-webkit-text-stroke:0.1px currentColor;transform-origin:100% 50%;transform:rotate(-45deg)">Week 12</div>
</body></html>
